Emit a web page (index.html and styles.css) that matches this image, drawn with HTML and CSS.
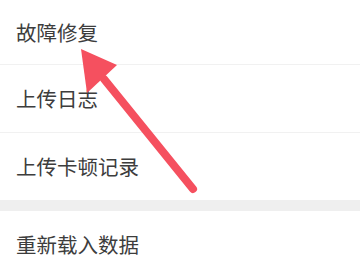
FILE: index.html
```html
<!DOCTYPE html>
<html lang="zh-CN">
<head>
<meta charset="utf-8">
<title>设置</title>
<link rel="stylesheet" href="styles.css">
</head>
<body>
<div class="page">
  <ul class="list">
    <li class="item item-first"><span class="label">故障修复</span></li>
    <li class="item"><span class="label">上传日志</span></li>
    <li class="item item-last"><span class="label">上传卡顿记录</span></li>
  </ul>
  <div class="divider"></div>
  <ul class="list">
    <li class="item item-last"><span class="label">重新载入数据</span></li>
  </ul>
  <svg class="arrow" width="360" height="270" viewBox="0 0 360 270" aria-hidden="true">
    <line x1="104" y1="79" x2="193" y2="189" stroke="#f5505f" stroke-width="8" stroke-linecap="round"/>
    <polygon points="81,49 87,93 117,65" fill="#f5505f"/>
  </svg>
</div>
</body>
</html>
```
FILE: styles.css
```css
html, body {
  margin: 0;
  padding: 0;
  background: #ffffff;
}
.page {
  position: relative;
  width: 360px;
  height: 270px;
  overflow: hidden;
  font-family: "Noto Sans CJK SC", "Noto Sans", sans-serif;
}
.list {
  list-style: none;
  margin: 0;
  padding: 0;
}
.item {
  height: 67px;
  display: flex;
  align-items: center;
  padding-left: 16px;
  border-bottom: 1px solid #f1f1f1;
  box-sizing: content-box;
}
.item-first {
  height: 64px;
}
.item-last {
  border-bottom: none;
}
.label {
  font-size: 20.5px;
  color: #3d3d3d;
  line-height: 1;
}
.divider {
  height: 11px;
  background: #efefef;
}
.arrow {
  position: absolute;
  left: 0;
  top: 0;
}
```
